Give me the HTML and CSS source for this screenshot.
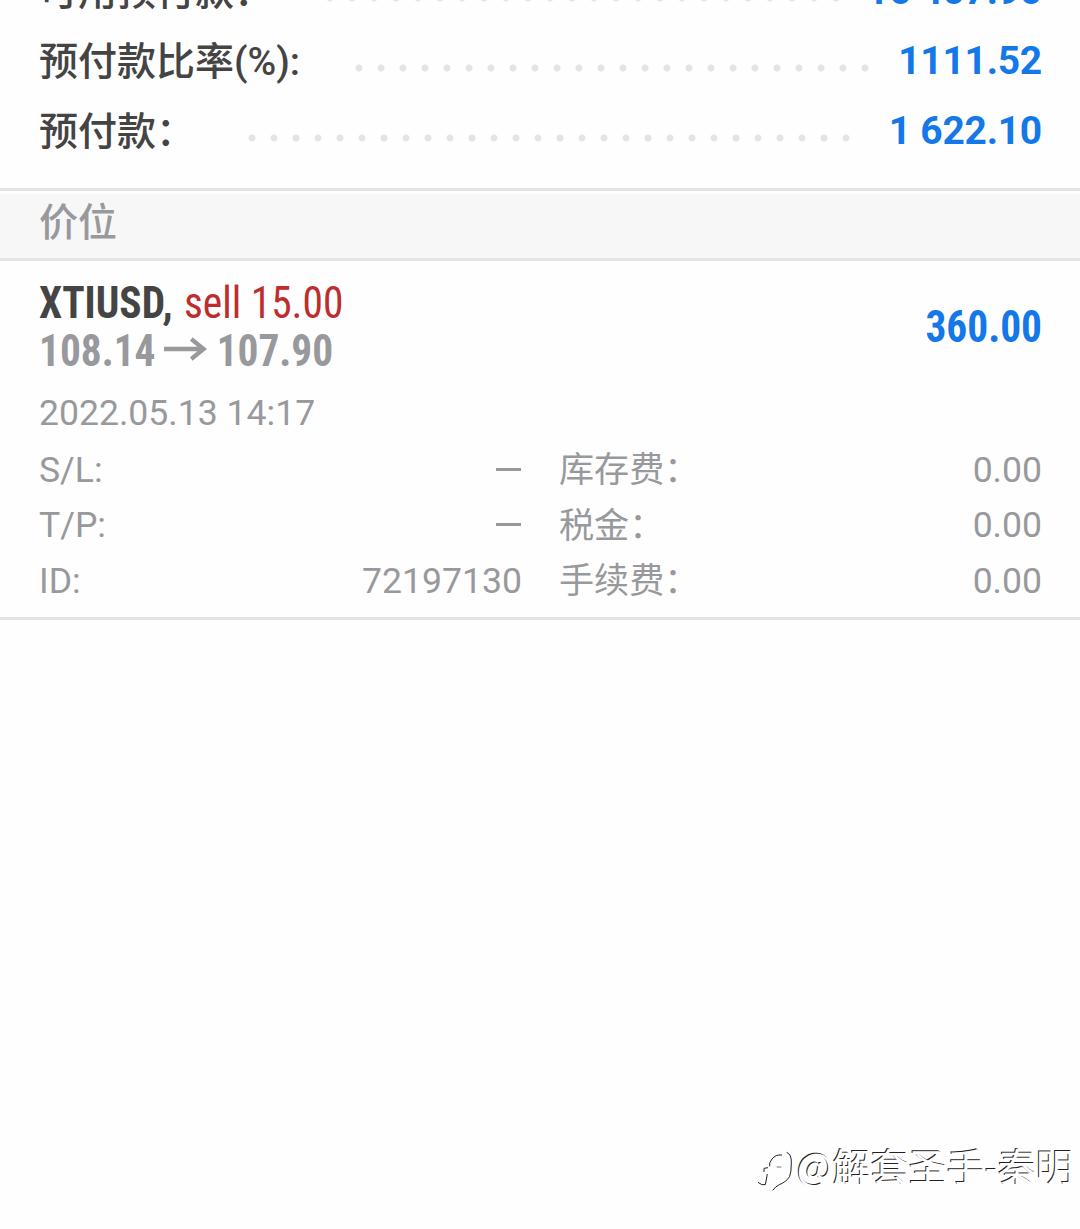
FILE: index.html
```html
<!DOCTYPE html>
<html lang="zh-CN">
<head>
<meta charset="utf-8">
<title>交易</title>
<link rel="stylesheet" href="styles.css">
</head>
<body>
<main class="screen">
  <section class="account">
    <div class="line"><span class="label">可用预付款：</span><span class="dots"></span><span class="amount">16 407.90</span></div>
    <div class="line"><span class="label">预付款比率(%):</span><span class="dots dots-level"></span><span class="amount">1111.52</span></div>
    <div class="line"><span class="label">预付款：</span><span class="dots dots-margin"></span><span class="amount">1 622.10</span></div>
  </section>
  <h2 class="heading">价位</h2>
  <section class="position">
    <div class="summary">
      <div class="deal">
        <div class="row"><b class="symbol">XTIUSD,</b><span class="side">sell 15.00</span></div>
        <div class="row prices"><b>108.14</b><svg class="arrow" width="46" height="26" viewBox="0 0 46 26"><path d="M0 13H42M29 3L42 13L29 23" fill="none" stroke="#98999c" stroke-width="4.500"/></svg><b>107.90</b></div>
      </div>
      <b class="profit">360.00</b>
    </div>
    <div class="time">2022.05.13 14:17</div>
    <div class="details">
      <span>S/L:</span><i class="dash"></i><span class="fee">库存费：</span><span class="value">0.00</span>
      <span>T/P:</span><i class="dash"></i><span class="fee">税金：</span><span class="value">0.00</span>
      <span>ID:</span><span class="value">72197130</span><span class="fee">手续费：</span><span class="value">0.00</span>
    </div>
  </section>
  <footer class="watermark">
    <svg class="mark" width="42" height="54" viewBox="0 0 126 162" fill="none" stroke="#222" stroke-width="3"><path d="M53 82Q50 72 60 60Q70 46 90 48M104 40Q119 46 118 72Q118 100 113 112Q104 128 82 137Q70 143 62 154M36 99V88L48 86M46 105L40 137Q30 140 18 130"/><path stroke="#777" d="M74 84H88"/></svg><span>@解套圣手-秦明</span>
  </footer>
</main>
</body>
</html>
```
FILE: styles.css
```css
* { box-sizing: border-box; }
body { margin: 0; background: #fff; font-family: Roboto, "Noto Sans CJK SC", sans-serif; color: #98999c; }
.screen { height: 1229px; overflow: hidden; display: flex; flex-direction: column; background: #fefefe; }
.account { height: 191px; padding: 0 38px 21px 39px; border-bottom: 3px solid #e4e4e4; display: flex; flex-direction: column; justify-content: flex-end; overflow: hidden; flex: none; }
.line { height: 70px; flex: none; display: flex; align-items: center; font-size: 39px; line-height: 70px; white-space: nowrap; }
.label { color: #444; font-weight: 500; }
.amount { color: #1478e8; font-weight: 700; margin-left: auto; letter-spacing: -.25px; padding-bottom: 2px; line-height: 68px; }
.dots { height: 8px; width: 528px; margin-left: 46px; margin-top: 11px; background: radial-gradient(circle at 11px 4px, #e4e4e4 3.200px, transparent 3.900px) 0 0 / 22px 8px; }
.dots-level { margin-left: 48px; }
.dots-margin { width: 616px; }
.heading { margin: 3px 0 0; height: 67px; flex: none; padding-left: 39px; background: #f7f7f7; border-bottom: 3px solid #e4e4e4; font-size: 39px; font-weight: 500; line-height: 58px; }
.position { height: 359px; flex: none; padding: 18px 38px 0 39px; border-bottom: 3px solid #e4e4e4; }
.summary { display: flex; justify-content: space-between; align-items: center; height: 96px; font-family: "Roboto Condensed", Roboto, sans-serif; font-stretch: 75%; font-size: 44px; }
.deal { transform: scaleX(.94); transform-origin: left; }
.row { display: flex; align-items: center; height: 48px; line-height: 48px; white-space: pre; gap: 12px; }
.prices { gap: 9.500px; }
.symbol { color: #444; }
.side { color: #be2d2d; }
.arrow { margin-bottom: 4px; }
.profit { color: #1478e8; transform: scaleX(.94); transform-origin: right; }
.time { height: 56px; margin-top: 10px; font-size: 35.600px; line-height: 57px; }
.details { display: grid; grid-template-columns: 160px 323px 200px 1fr; grid-auto-rows: 55.500px; font-size: 35.600px; line-height: 55.500px; align-items: center; padding-top: 1.500px; }
.value { text-align: right; }
.fee { padding-left: 37px; font-size: 35.100px; padding-top: 1px; }
.dash { justify-self: end; width: 25px; height: 3px; margin: 0 1px 2px 0; background: #98999c; }
.watermark { margin-top: auto; height: 92px; flex: none; display: flex; justify-content: flex-end; padding-right: 6px; font-family: "Noto Sans CJK SC", sans-serif; font-size: 38px; line-height: 56px; color: #fff; text-shadow: -1px -1px 0 #222; }
.mark { margin-top: 2px; margin-right: 3px; }
```
